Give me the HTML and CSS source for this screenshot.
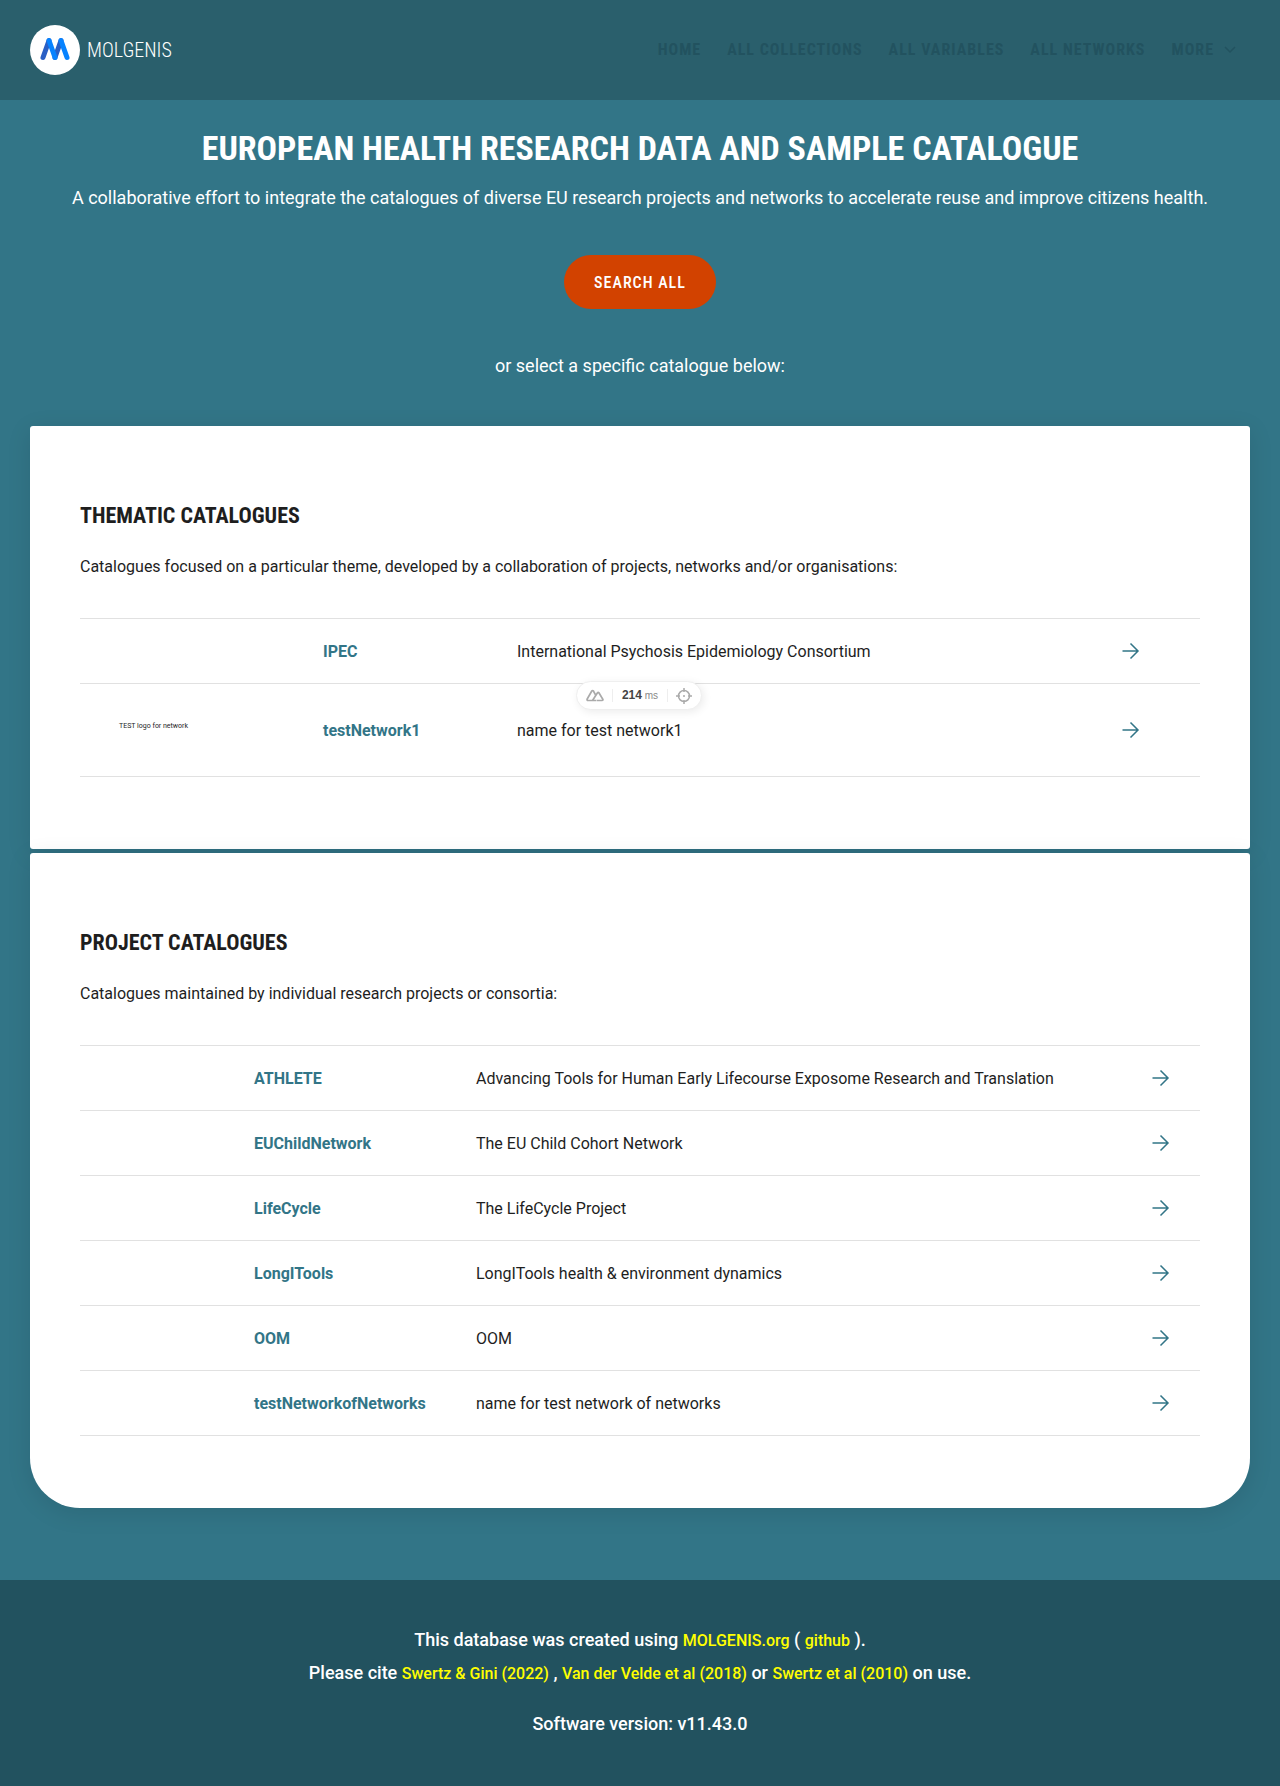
FILE: index.html
```html
<!DOCTYPE html>
<html lang="en">
<head>
<meta charset="utf-8">
<meta name="viewport" content="width=device-width, initial-scale=1">
<title>European Health Research Data and Sample Catalogue</title>
<link rel="stylesheet" href="styles.css">
</head>
<body>
<svg class="sprite" aria-hidden="true">
  <symbol id="arrow" viewBox="0 0 24 24"><path d="M3.500 12h15.500M11.500 4.500l7.500 7.500-7.500 7.500" fill="none" stroke="currentColor" stroke-width="1.500"/></symbol>
</svg>
<header class="header">
  <a class="logo" href="#">
    <svg class="logo-mark" viewBox="0 0 50 50" aria-hidden="true">
      <circle cx="25" cy="25" r="25" fill="#fff"/>
      <g fill="none" stroke-width="5" stroke-linecap="round">
        <path d="M13 32.500 19 15.500M25 32.500 31 15.500" stroke="#2a5fc4"/>
        <path d="M19 15.500 25 32.500M31 15.500 37 32.500" stroke="#0783ff"/>
      </g>
    </svg>
    <span class="logo-text">MOLGENIS</span>
  </a>
  <nav class="nav">
    <a href="#">HOME</a>
    <a href="#">ALL COLLECTIONS</a>
    <a href="#">ALL VARIABLES</a>
    <a href="#">ALL NETWORKS</a>
    <button class="more" type="button">MORE
      <svg class="chevron" viewBox="0 0 12 8" aria-hidden="true"><path d="M1 1l5 5 5-5" fill="none" stroke="currentColor" stroke-width="1.500"/></svg>
    </button>
  </nav>
</header>
<main class="main">
  <section class="hero">
    <h1>EUROPEAN HEALTH RESEARCH DATA AND SAMPLE CATALOGUE</h1>
    <p>A collaborative effort to integrate the catalogues of diverse EU research projects and networks to accelerate reuse and improve citizens health.</p>
    <button class="search" type="button">SEARCH ALL</button>
    <p>or select a specific catalogue below:</p>
  </section>
  <section class="card">
    <h2>THEMATIC CATALOGUES</h2>
    <p>Catalogues focused on a particular theme, developed by a collaboration of projects, networks and/or organisations:</p>
    <table class="list thematic">
      <tbody>
        <tr><td></td><td><a href="#">IPEC</a></td><td>International Psychosis Epidemiology Consortium</td><td><a href="#" aria-label="Open IPEC"><svg class="arrow"><use href="#arrow"/></svg></a></td></tr>
        <tr class="tall"><td><span class="network-logo">TEST logo for network</span></td><td><a href="#">testNetwork1</a></td><td>name for test network1</td><td><a href="#" aria-label="Open testNetwork1"><svg class="arrow"><use href="#arrow"/></svg></a></td></tr>
      </tbody>
    </table>
  </section>
  <section class="card last">
    <h2>PROJECT CATALOGUES</h2>
    <p>Catalogues maintained by individual research projects or consortia:</p>
    <table class="list project">
      <tbody>
        <tr><td></td><td><a href="#">ATHLETE</a></td><td>Advancing Tools for Human Early Lifecourse Exposome Research and Translation</td><td><a href="#" aria-label="Open ATHLETE"><svg class="arrow"><use href="#arrow"/></svg></a></td></tr>
        <tr><td></td><td><a href="#">EUChildNetwork</a></td><td>The EU Child Cohort Network</td><td><a href="#" aria-label="Open EUChildNetwork"><svg class="arrow"><use href="#arrow"/></svg></a></td></tr>
        <tr><td></td><td><a href="#">LifeCycle</a></td><td>The LifeCycle Project</td><td><a href="#" aria-label="Open LifeCycle"><svg class="arrow"><use href="#arrow"/></svg></a></td></tr>
        <tr><td></td><td><a href="#">LongITools</a></td><td>LongITools health &amp; environment dynamics</td><td><a href="#" aria-label="Open LongITools"><svg class="arrow"><use href="#arrow"/></svg></a></td></tr>
        <tr><td></td><td><a href="#">OOM</a></td><td>OOM</td><td><a href="#" aria-label="Open OOM"><svg class="arrow"><use href="#arrow"/></svg></a></td></tr>
        <tr><td></td><td><a href="#">testNetworkofNetworks</a></td><td>name for test network of networks</td><td><a href="#" aria-label="Open testNetworkofNetworks"><svg class="arrow"><use href="#arrow"/></svg></a></td></tr>
      </tbody>
    </table>
  </section>
</main>
<footer class="footer">
  <p>This database was created using <a href="#">MOLGENIS.org</a> ( <a href="#">github</a> ).</p>
  <p>Please cite <a href="#">Swertz &amp; Gini (2022)</a> , <a href="#">Van der Velde et al (2018)</a> or <a href="#">Swertz et al (2010)</a> on use.</p>
  <p class="version">Software version: v11.43.0</p>
</footer>
<aside class="devtools">
  <svg class="nuxt" viewBox="0 0 18 13" aria-hidden="true"><path d="M10 11.500H2c-.8 0-1.200-.8-.8-1.500L5.800 2c.4-.7 1.200-.7 1.600 0l2.100 3.800M6.500 11.500l5-7.800c.4-.6 1-.6 1.400 0l3.900 6.500c.4.700 0 1.300-.7 1.300h-5.600" fill="none" stroke="currentColor" stroke-width="1.700" stroke-linejoin="round"/></svg>
  <span class="timing"><b>214</b> ms</span>
  <svg class="target" viewBox="0 0 16 16" aria-hidden="true"><g fill="none" stroke="currentColor" stroke-width="1.500"><circle cx="8" cy="8" r="5.500"/><path d="M8 0v4M8 12v4M0 8h4M12 8h4"/></g><circle cx="8" cy="8" r="1" fill="currentColor"/></svg>
</aside>
</body>
</html>
```
FILE: styles.css
```css
* { box-sizing: border-box; }

body {
  position: relative;
  margin: 0;
  background: #327587;
  color: #1e1e1e;
  font-family: Roboto, "Liberation Sans", sans-serif;
  font-size: 16px;
  line-height: 24px;
}

h1, h2, p { margin: 0; }
a { color: inherit; text-decoration: none; }
button { border: 0; cursor: pointer; }

.sprite { display: none; }

.header {
  display: flex;
  align-items: center;
  justify-content: space-between;
  height: 100px;
  padding: 0 44px 0 30px;
  background: #2a5f6c;
}

.header, h1, h2, .search, .more { font-family: "Liberation Sans Narrow", "Roboto Condensed", sans-serif; }

.logo { display: flex; align-items: center; gap: 7px; color: #fff; }
.logo-mark { width: 50px; height: 50px; }
.logo-text { font-size: 20px; font-weight: 300; }

.nav { display: flex; align-items: center; gap: 26px; color: #22525f; }
.nav a, .more { font-size: 16px; font-weight: 700; line-height: 24px; letter-spacing: 1px; }
.more { display: flex; align-items: center; gap: 10px; padding: 0; background: none; color: inherit; }
.chevron { width: 12px; height: 8px; }

.main { padding: 0 30px 72px; }

.hero {
  display: flex;
  flex-direction: column;
  align-items: center;
  padding: 20px 0 46px;
  color: #fff;
  font-size: 18px;
  line-height: 28px;
  text-align: center;
}
h1 { font-size: 34px; line-height: 56px; padding-bottom: 8px; }

.search {
  height: 54px;
  margin: 43px 0;
  padding: 0 30px;
  border-radius: 27px;
  background: #d24200;
  color: #fff;
  font-size: 16px;
  font-weight: 500;
  letter-spacing: 1px;
}

.card {
  padding: 72px 50px;
  border-radius: 3px;
  background: #fff;
  box-shadow: 0 5px 25px rgba(0, 0, 0, 0.1);
}
.card.last { margin-top: 4px; border-radius: 3px 3px 50px 50px; }
h2 { padding-bottom: 21px; font-size: 22px; line-height: 36px; }
.card p { padding-bottom: 39px; }

.list { width: 100%; border-collapse: collapse; table-layout: fixed; }
.list tr { height: 65px; border-top: 1px solid #e1e1e1; border-bottom: 1px solid #e1e1e1; }
.list .tall { height: 93px; }
.list td { padding: 0; }
.list td:nth-child(2), .list td:nth-child(3) { padding-top: 2px; }
.list td:nth-child(2) { color: #327587; font-weight: 700; }
.list td:nth-child(4) { color: #327587; }
.thematic td:nth-child(1) { width: 243px; }
.thematic td:nth-child(2) { width: 194px; }
.thematic td:nth-child(4) { width: 81px; }
.project td:nth-child(1) { width: 174px; }
.project td:nth-child(2) { width: 222px; }
.project td:nth-child(4) { width: 51px; }
.arrow { display: block; width: 24px; height: 24px; }
.network-logo { display: block; padding: 0 0 8px 39px; font-size: 7px; line-height: 16px; }

.footer {
  padding: 43px 20px;
  background: #22525f;
  color: #fff;
  font-size: 18px;
  font-weight: 500;
  line-height: 33px;
  text-align: center;
}
.footer a { color: #ff0; font-size: 16px; line-height: 20px; }
.version { margin-top: 18px; padding-bottom: 3px; }

.devtools {
  position: absolute;
  top: 681px;
  left: 50%;
  display: flex;
  align-items: center;
  justify-content: space-between;
  width: 126px;
  height: 29px;
  margin-left: -64px;
  padding: 0 9px;
  border: 1px solid #efefef;
  border-radius: 15px;
  background: #fff;
  color: #aaa;
  box-shadow: 2px 2px 8px rgba(0, 0, 0, 0.08);
  font: 10px/12px "Liberation Sans", sans-serif;
}
.nuxt { width: 18px; height: 13px; }
.target { width: 16px; height: 16px; }
.timing { padding: 0 9px; border: solid #eee; border-width: 0 1px; color: #888; }
.timing b { color: #444; font-size: 12px; }
```
